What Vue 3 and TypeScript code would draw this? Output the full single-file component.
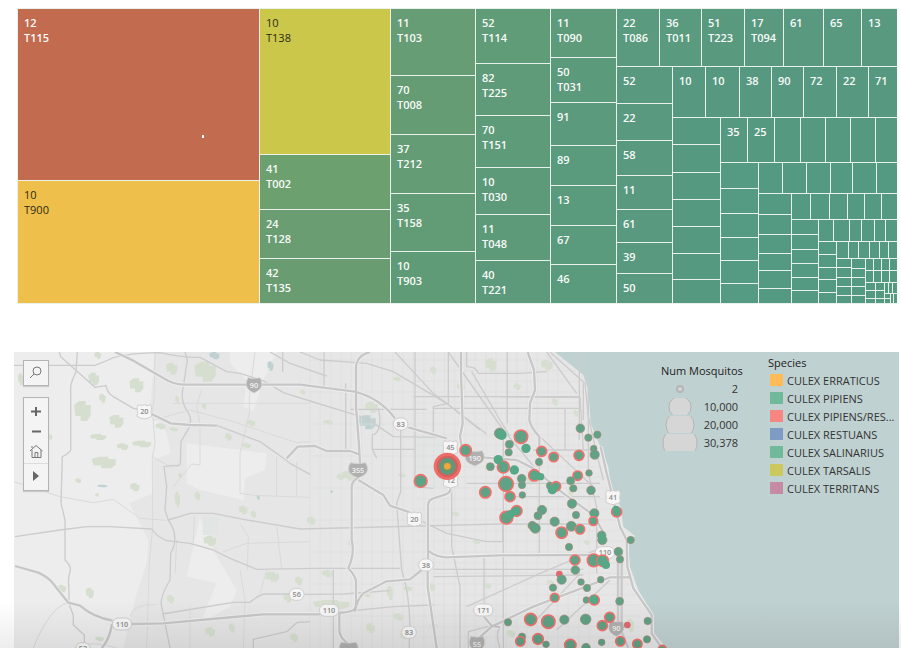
<script setup lang="ts">
import { h, type FunctionalComponent, type VNode } from 'vue'

/* ---------- Treemap ---------- */

interface Strip {
  axis: 'col' | 'row'
  end: number
  cuts: number[]
  tones: string[]
  labels?: string[]
}

const RIGHT = 897
const BOTTOM = 303

const deep = ['#549a82']

/* Each strip is cut off the remaining area: a column on its left or a row on its top. */
const strips: Strip[] = [
  { axis: 'col', end: 259, cuts: [180], tones: ['#c26b4f', '#efbf4b'], labels: ['12 T115', '10 T900'] },
  { axis: 'col', end: 390, cuts: [154, 209, 258], tones: ['#cac74b', '#6da06f', '#6a9d71', '#699c71'], labels: ['10 T138', '41 T002', '24 T128', '42 T135'] },
  { axis: 'col', end: 475, cuts: [75, 134, 193, 251], tones: ['#679d74', '#659c74', '#639c75', '#629c76', '#609b77'], labels: ['11 T103', '70 T008', '37 T212', '35 T158', '10 T903'] },
  { axis: 'col', end: 550, cuts: [63, 115, 167, 214, 260], tones: ['#609c78', '#5f9b78', '#5e9b79', '#5d9a7a', '#5d9a7a', '#5c9a7b'], labels: ['52 T114', '82 T225', '70 T151', '10 T030', '11 T048', '40 T221'] },
  { axis: 'col', end: 616, cuts: [57, 102, 145, 185, 225, 264], tones: ['#5d9b7b', '#5c9a7c', '#5b9a7d', '#5a9a7d'], labels: ['11 T090', '50 T031', '91', '89', '13', '67', '46'] },
  { axis: 'row', end: 66, cuts: [659, 701, 744, 783, 823, 861], tones: ['#5a9a7e', '#5a9a7e', '#59997e', '#59997f'], labels: ['22 T086', '36 T011', '51 T223', '17 T094', '61', '65', '13'] },
  { axis: 'col', end: 672, cuts: [103, 140, 175, 209, 242, 273], tones: ['#59997f', '#589980'], labels: ['52', '22', '58', '11', '61', '39', '50'] },
  { axis: 'row', end: 117, cuts: [705, 739, 771, 803, 836, 868], tones: ['#579980'], labels: ['10', '10', '38', '90', '72', '22', '71'] },
  { axis: 'col', end: 720, cuts: [144, 172, 199, 226, 253, 279], tones: ['#569981'] },
  { axis: 'row', end: 162, cuts: [747, 774, 800, 825, 850, 875], tones: ['#569981'], labels: ['35', '25'] },
  { axis: 'col', end: 758, cuts: [188, 213, 237, 260, 283], tones: ['#559a82'] },
  { axis: 'row', end: 193, cuts: [782, 806, 830, 852, 876], tones: deep },
  { axis: 'col', end: 791, cuts: [214, 234, 253, 270, 288], tones: deep },
  { axis: 'row', end: 219, cuts: [810, 829, 847, 864, 881], tones: deep },
  { axis: 'col', end: 818, cuts: [234, 249, 263, 277, 290], tones: deep },
  { axis: 'row', end: 241, cuts: [833, 849, 861, 874, 885], tones: deep },
  { axis: 'col', end: 836, cuts: [254, 267, 279, 292], tones: deep },
  { axis: 'row', end: 258, cuts: [848, 858, 869, 879, 888], tones: deep },
  { axis: 'col', end: 851, cuts: [267, 277, 286, 295], tones: deep },
  { axis: 'col', end: 865, cuts: [268, 277, 286, 295], tones: deep },
  { axis: 'row', end: 270, cuts: [873, 881, 889], tones: deep },
  { axis: 'row', end: 282, cuts: [873, 881, 889], tones: deep },
  { axis: 'col', end: 875, cuts: [290, 298], tones: deep },
  { axis: 'col', end: 884, cuts: [290, 298], tones: deep },
  { axis: 'row', end: 293, cuts: [888, 892], tones: deep },
  { axis: 'col', end: 890, cuts: [298], tones: deep },
  { axis: 'row', end: BOTTOM, cuts: [893], tones: deep },
]

const grow = (n: number) => ({ flexGrow: n })

function renderArea(index: number, x: number, y: number): VNode[] {
  const strip = strips[index]
  const isCol = strip.axis === 'col'
  const from = isCol ? x : y
  const limit = isCol ? RIGHT : BOTTOM
  const stops = [isCol ? y : x, ...strip.cuts, isCol ? BOTTOM : RIGHT]

  const cells = stops.slice(1).map((stop, i) => {
    const label = strip.labels?.[i]
    const tone = strip.tones[Math.min(i, strip.tones.length - 1)]
    const onLight = tone === '#efbf4b' || tone === '#cac74b'
    return h(
      'div',
      { class: ['cell', { dark: onLight }], style: { ...grow(stop - stops[i] - 1), background: tone } },
      label ? label.split(' ').map((line) => h('span', line)) : [],
    )
  })

  const out = [h('div', { class: ['strip', strip.axis], style: grow(strip.end - from - 1) }, cells)]
  if (index + 1 < strips.length) {
    const nx = isCol ? strip.end : x
    const ny = isCol ? y : strip.end
    out.push(
      h(
        'div',
        { class: ['area', strips[index + 1].axis === 'col' ? 'across' : 'down'], style: grow(limit - strip.end - 1) },
        renderArea(index + 1, nx, ny),
      ),
    )
  }
  return out
}

const TreemapArea: FunctionalComponent = () => h('div', { class: 'area across' }, renderArea(0, 17, 8))

/* ---------- Map ---------- */

type Box = [number, number, number, number]

const parks: Box[] = [
  [283, 36, 20, 20], [265, 98, 32, 38], [388, 115, 42, 42], [297, 162, 20, 26], [222, 183, 50, 60], [328, 225, 42, 38],
  [270, 282, 48, 18], [350, 310, 35, 20], [396, 302, 58, 20], [275, 350, 72, 35], [225, 415, 18, 14], [390, 430, 28, 24],
  [498, 68, 34, 36], [583, 65, 64, 60], [525, 168, 12, 20], [605, 190, 14, 18], [738, 240, 28, 18], [675, 280, 20, 22],
  [725, 310, 28, 14], [524, 455, 16, 46], [584, 455, 17, 26], [716, 497, 26, 26], [752, 512, 16, 22], [610, 588, 38, 30],
  [795, 695, 42, 30], [885, 710, 22, 26], [257, 743, 24, 32], [172, 735, 26, 22], [850, 760, 25, 28], [615, 862, 30, 28],
  [500, 765, 22, 25], [285, 460, 12, 10], [54, 100, 16, 36], [145, 283, 12, 16], [466, 250, 30, 18], [508, 262, 26, 12],
  [686, 850, 18, 28], [870, 880, 24, 26], [535, 398, 10, 16], [900, 150, 16, 14], [285, 890, 26, 14],
  [1095, 185, 38, 34], [1025, 392, 46, 30], [1010, 402, 20, 18], [920, 530, 26, 24], [965, 690, 34, 22], [938, 780, 110, 28],
  [1160, 738, 20, 42], [1210, 738, 26, 16], [1282, 730, 24, 22], [1090, 760, 22, 12], [1180, 820, 30, 22], [1098, 850, 26, 30],
  [1455, 55, 34, 40], [1622, 60, 36, 30], [1540, 130, 22, 20], [1655, 175, 18, 22], [1180, 110, 22, 14], [1290, 80, 18, 22],
  [1370, 130, 24, 22], [1195, 400, 22, 12], [1580, 410, 20, 24], [1418, 600, 22, 12], [1600, 640, 26, 12], [1355, 515, 22, 14],
  [1705, 440, 12, 34], [1450, 730, 24, 16], [1640, 720, 22, 14], [1290, 850, 20, 16], [970, 240, 28, 14], [905, 130, 18, 14],
  [1720, 210, 14, 20], [1880, 836, 22, 40], [1200, 878, 22, 20], [1520, 870, 26, 22], [1045, 600, 12, 22], [1750, 600, 20, 14],
]

const lakes: Box[] = [[628, 36, 30, 22], [802, 64, 18, 28], [292, 434, 30, 8], [770, 464, 9, 15], [1075, 226, 52, 42], [990, 450, 8, 10]]

const blob = ([x, y, w, hgt]: Box) =>
  `M${x} ${y + hgt * 0.2}L${x + w * 0.3} ${y}H${x + w * 0.7}V${y + hgt * 0.2}H${x + w}V${y + hgt * 0.7}L${x + w * 0.8} ${y + hgt}H${x + w * 0.4}V${y + hgt * 0.75}H${x + w * 0.08}Z`

const thick = [
  'M345 36L400 62 500 120Q525 134 555 134H900L1065 155Q1140 175 1185 235M1225 262L1340 295',
  'M455 222L512 250 570 255 652 257',
  'M860 355L893 320 945 318 980 333H1050L1078 343',
  'M45 678L115 698Q140 710 155 725L205 788 240 797Q280 832 338 842M392 852L490 850 790 823H960',
  'M336 852Q328 900 305 924',
  'M1110 36Q1065 48 1068 90V200Q1078 320 1080 372M1075 412Q1055 425 1055 440V600Q1065 640 1045 685Q1068 710 1068 725V800Q1062 818 1018 818V870Q1018 892 1045 912',
  'M1075 420L1150 465 1170 497 1230 517',
  'M1383 36V100L1388 250 1380 290 1386 325',
  'M1445 352L1550 360 1600 385 1690 460 1780 525 1812 580',
  'M1583 36L1602 90 1605 150 1590 190 1588 240Q1592 262 1618 290V360',
  'M1352 445Q1352 458 1335 464L1300 475Q1284 480 1284 495V660M1283 690V740L1310 924',
  'M1284 632Q1310 652 1340 652L1500 646 1800 645',
  'M1065 815Q1070 780 1090 760L1160 724 1230 718 1265 690',
  'M1425 905L1475 860 1600 800 1830 712',
  'M1452 830L1475 857 1500 862',
  'M1802 320L1820 400 1845 500 1860 560 1880 600 1882 680 1900 745 1955 825V880L1985 924',
  'M1830 712H1890',
]

const medium = [
  'M178 36L182 50 285 142 318 137Q322 160 340 170L400 205 415 208',
  'M652 257L780 305 830 340 870 370 930 403',
  'M232 36L228 95Q212 130 212 140V330Q208 340 187 350L183 490 195 540V660Q216 680 210 695T206 735T206 790L220 825V855L253 885V924',
  'M555 36L562 60 550 140Q540 180 560 210T566 265L543 305 541 370Q540 380 520 376L492 380 500 440 495 510 505 540Q540 590 512 640L510 720Q485 760 483 790L510 924',
  'M42 76H285L325 60Q360 40 480 38Q550 54 600 52L680 95 720 100 790 122 850 158 930 183 1100 235 1180 290 1320 292',
  'M45 590L180 570 260 560 330 560 455 567Q470 590 500 602L570 610 640 630 690 655 770 688 940 685H1200',
  'M505 540L570 520H640L730 538 900 567 1500 552H1800',
  'M487 822L700 787H750Q775 765 795 762H870M912 763L1030 762 1170 752',
  'M760 924V898L860 875 890 848 930 845',
  'M848 36V95M810 36L870 70 980 108',
  'M1202 270V455L1190 490 1205 690Q1228 760 1230 860M1228 895V924',
  'M1268 545L1340 580 1460 605H1508V552',
  'M972 36V140M1037 130V330M1245 36V440L1300 445',
  'M900 36L960 60 1100 70 1180 95 1340 190 1440 270',
  'M1185 36L1300 160 1460 282M1345 36L1510 270 1610 390',
  'M1415 95L1500 240 1530 290M1640 36L1730 160M1620 290L1780 440',
  'M1400 36V80Q1430 80 1435 100L1560 100 1640 95',
  'M1300 290V200L1345 190V36M1050 208H1280M1300 205H1740M1240 170H1740',
  'M1135 205Q1150 275 1117 285V328L1130 355M1117 328H1245',
  'M1452 655V800M1355 450V620L1380 740V924',
  'M1510 270V924M1522 36V250M1618 360V640M1695 205V330M1738 36V300M1765 120V400L1790 500V700',
  'M1500 170L1740 172 1750 330M1600 330H1780M1400 430H1800M1540 470H1800M1300 688H1750M1300 710L1750 705',
  'M1400 800L1620 700 1800 625M1670 870L1830 720M1590 860L1740 700',
  'M1475 857L1405 875V924M1500 862Q1485 880 1500 924M1000 924V690M1300 795L1180 800 960 822',
  'M1650 36L1755 130 1765 230 1790 340 1810 420M1750 130V240',
]

const thin = [
  'M42 425L180 470 280 488 340 478 420 535 500 541',
  'M465 36L462 180 457 210 465 310 457 350 458 560 448 670 440 924',
  'M604 150L590 200 600 250V375L575 372 520 440M457 350L520 385',
  'M765 36L748 170V220L720 340V460L760 466 930 472M830 350V470M890 365V470',
  'M460 240L570 210 700 245 890 308 930 305M520 190H930',
  'M720 550L745 590 742 690M830 560L845 685M670 635L740 610 930 605',
  'M583 530L580 610M530 600L525 700M720 690L735 780 730 924M800 690L780 760M390 830Q400 790 470 794M570 800V924',
  'M100 924Q150 800 205 788M260 912Q300 908 350 924',
]

/* Local streets: a fine grid that gets denser towards the shore. */
const streets = [
  ...Array.from({ length: 28 }, (_, i) => `M${930 + i * 31} ${i > 24 ? 240 : 36}V924`),
  ...Array.from({ length: 27 }, (_, i) => `M${i % 3 ? 1240 : 930} ${60 + i * 32}H${1720 + Math.min(i * 9, 200)}`),
]

type Shape = 'oval' | 'us' | 'interstate'
interface Shield { x: number; y: number; text: string; shape: Shape }

const shields: Shield[] = [
  { x: 433, y: 215, text: '20', shape: 'us' },
  { x: 762, y: 136, text: '90', shape: 'interstate' },
  { x: 890, y: 763, text: '56', shape: 'oval' },
  { x: 366, y: 852, text: '110', shape: 'oval' },
  { x: 249, y: 926, text: '52', shape: 'oval' },
  { x: 1202, y: 252, text: '83', shape: 'oval' },
  { x: 1351, y: 323, text: '45', shape: 'us' },
  { x: 1352, y: 422, text: '12', shape: 'us' },
  { x: 1424, y: 355, text: '190', shape: 'interstate' },
  { x: 1074, y: 391, text: '355', shape: 'interstate' },
  { x: 1243, y: 537, text: '20', shape: 'us' },
  { x: 1278, y: 675, text: '38', shape: 'oval' },
  { x: 987, y: 811, text: '110', shape: 'oval' },
  { x: 1450, y: 810, text: '171', shape: 'oval' },
  { x: 1227, y: 877, text: '83', shape: 'oval' },
  { x: 1431, y: 912, text: '55', shape: 'interstate' },
  { x: 1046, y: 930, text: '', shape: 'interstate' },
  { x: 1815, y: 638, text: '110', shape: 'oval' },
  { x: 1839, y: 472, text: '41', shape: 'us' },
  { x: 1849, y: 866, text: '90', shape: 'interstate' },
]

/* x, y, radius, kind: s = strong ring, t = thin ring, g = plain green, r = plain red */
type Trap = [number, number, number, 's' | 't' | 'g' | 'r']
const traps: Trap[] = [
  [1262, 423, 19, 's'], [1397, 331, 17, 's'], [1499, 280, 16, 't'], [1505, 285, 15, 'g'], [1563, 290, 20, 's'],
  [1528, 313, 12, 't'], [1526, 337, 11, 't'], [1578, 325, 14, 'g'], [1625, 334, 15, 's'], [1661, 351, 14, 's'],
  [1617, 366, 11, 't'], [1510, 381, 18, 's'], [1495, 359, 14, 'g'], [1471, 380, 12, 't'], [1543, 390, 14, 'g'],
  [1456, 457, 17, 's'], [1518, 432, 22, 's'], [1565, 416, 13, 't'], [1566, 435, 11, 't'], [1530, 470, 15, 's'],
  [1567, 465, 10, 't'], [1603, 406, 17, 's'], [1606, 406, 13, 'g'], [1622, 410, 11, 'g'], [1650, 437, 11, 't'],
  [1668, 439, 14, 's'], [1657, 449, 14, 'g'], [1741, 265, 13, 't'], [1765, 293, 11, 't'],
  [1792, 284, 11, 't'], [1781, 326, 10, 't'], [1784, 344, 14, 't'], [1737, 346, 15, 's'], [1733, 407, 14, 's'],
  [1767, 399, 10, 't'], [1712, 422, 12, 't'], [1720, 445, 11, 't'], [1773, 451, 13, 't'], [1716, 491, 14, 't'],
  [1728, 525, 11, 't'], [1783, 520, 14, 't'], [1780, 543, 13, 's'], [1550, 513, 16, 's'], [1519, 533, 19, 's'],
  [1531, 523, 13, 'g'], [1546, 514, 12, 'g'], [1626, 510, 14, 't'], [1614, 527, 12, 't'],
  [1597, 557, 13, 't'], [1606, 565, 15, 't'], [1664, 545, 14, 't'], [1685, 578, 17, 's'], [1714, 559, 15, 't'],
  [1740, 568, 14, 's'], [1805, 586, 13, 't'], [1807, 600, 14, 't'], [1805, 590, 11, 'g'], [1707, 621, 11, 't'],
  [1725, 660, 15, 's'], [1726, 690, 13, 't'], [1781, 661, 19, 's'], [1808, 662, 17, 's'],
  [1806, 663, 14, 'g'], [1818, 675, 12, 'g'], [1678, 702, 10, 'r'], [1685, 719, 14, 't'], [1743, 726, 10, 't'],
  [1761, 744, 11, 't'], [1802, 719, 10, 't'], [1659, 743, 11, 't'], [1664, 773, 13, 's'], [1759, 780, 10, 't'],
  [1783, 780, 15, 's'], [1781, 778, 12, 'g'], [1592, 838, 18, 's'], [1645, 845, 20, 's'], [1693, 839, 14, 't'],
  [1757, 838, 16, 't'], [1524, 847, 11, 't'], [1829, 832, 15, 's'], [1807, 857, 15, 's'], [1614, 897, 16, 's'],
  [1638, 913, 10, 't'], [1566, 890, 11, 't'], [1561, 904, 14, 's'],
  [1711, 915, 17, 's'], [1758, 923, 13, 't'], [1805, 907, 10, 't'], [1850, 516, 15, 's'], [1848, 508, 11, 'g'],
  [1892, 600, 11, 't'], [1855, 635, 13, 't'], [1860, 658, 11, 't'], [1859, 784, 12, 't'], [1943, 843, 11, 't'],
  [1882, 855, 10, 'r'], [1861, 904, 14, 's'], [1941, 898, 11, 't'], [1912, 912, 14, 's'], [1987, 928, 12, 's'],
]

/* ---------- Legends ---------- */

const sizes = [
  { label: '2', r: 3 },
  { label: '10,000', r: 11 },
  { label: '20,000', r: 14 },
  { label: '30,378', r: 17 },
]

const species = [
  { name: 'CULEX ERRATICUS', color: '#ffbc56' },
  { name: 'CULEX PIPIENS', color: '#71b99b' },
  { name: 'CULEX PIPIENS/RES...', color: '#f58681' },
  { name: 'CULEX RESTUANS', color: '#7e9bc3' },
  { name: 'CULEX SALINARIUS', color: '#71b99b' },
  { name: 'CULEX TARSALIS', color: '#cbc85e' },
  { name: 'CULEX TERRITANS', color: '#c68ba4' },
]
</script>

<template>
  <main class="page">
    <section class="treemap">
      <TreemapArea />
      <span class="pointer"></span>
    </section>

    <section class="map">
      <svg class="canvas" viewBox="42 36 2655 888" preserveAspectRatio="xMinYMin slice">
        <rect x="42" y="36" width="2655" height="888" fill="#e6e6e6" />
        <g fill="#ededed">
          <path d="M42 36H465L450 200 500 280 512 340 460 360V460L388 490 445 600 440 670 410 760 370 924H42Z" />
          <path d="M560 310L800 340 795 390 735 415 730 480 600 450 560 430Z" />
          <path d="M600 530L645 640 710 750 690 800 600 850 650 730 560 710Z" />
          <path d="M690 36H830L790 120 760 215 730 200 740 120 690 70Z" />
        </g>
        <path d="M1245 290H1325L1345 440 1300 442 1245 420Z" fill="#e1e5e3" />
        <path d="M608 530H655V585H608Z" fill="#e1e5e3" />
        <g fill="#d6dfcf"><path v-for="(p, i) in parks" :key="i" :d="blob(p)" /></g>
        <g fill="#bfd1d1"><path v-for="(p, i) in lakes" :key="i" :d="blob(p)" /></g>
        <g class="line street"><path v-for="(d, i) in streets" :key="i" :d="d" /></g>
        <g class="line thin"><path v-for="(d, i) in thin" :key="i" :d="d" /></g>
        <path d="M1665 36L1750 105 1765 150 1772 250 1805 330 1825 380 1832 440 1862 500 1870 560 1905 588 1884 612 1890 680 1915 750 1960 825 1962 880 2000 924H2697V36Z" fill="#c0d1d1" />
        <g class="line medium"><path v-for="(d, i) in medium" :key="i" :d="d" /></g>
        <g class="line casing"><path v-for="(d, i) in thick" :key="i" :d="d" /></g>
        <g class="line thick"><path v-for="(d, i) in thick" :key="i" :d="d" /></g>
        <path class="line trunk" d="M1854 640V850L1885 924M1865 640V850" />

        <g v-for="(s, i) in shields" :key="i" :transform="`translate(${s.x} ${s.y})`">
          <rect v-if="s.shape === 'oval'" :x="s.text.length > 2 ? -29 : -22" y="-18" :width="s.text.length > 2 ? 58 : 44" height="36" rx="18" class="plate" />
          <path v-else-if="s.shape === 'us'" d="M-18 -21L-8 -18 0 -21 8 -18 18 -21 22 -12 20 0 22 14 12 19 0 22 -12 19 -22 14 -20 0 -22 -12Z" class="plate" />
          <path
            v-else
            :transform="s.text.length === 2 ? '' : 'scale(1.25 1)'"
            d="M-18 -23Q0 -18 18 -23Q28 -4 18 11Q10 19 0 23Q-10 19 -18 11Q-28 -4 -18 -23Z"
            class="badge"
          />
          <text v-if="s.text" y="8" :class="['route', { light: s.shape === 'interstate' }]">{{ s.text }}</text>
        </g>

        <g>
          <circle v-for="(t, i) in traps" :key="i" :cx="t[0]" :cy="t[1]" :r="t[2]" :class="['trap', t[3]]" />
          <circle cx="1342" cy="379" r="41" fill="#ee6c68" />
          <circle cx="1342" cy="379" r="32" fill="#d2605c" />
          <circle cx="1342" cy="379" r="25" fill="#5b9a7b" />
          <circle cx="1342" cy="379" r="16" fill="#71956c" />
          <circle cx="1342" cy="379" r="10" fill="#efa93a" />
        </g>
      </svg>

      <div class="tools">
        <button type="button" class="tool search" aria-label="Search">
          <svg viewBox="0 0 16 16" width="16" height="16"><circle cx="9" cy="6" r="4" /><path d="M6 9L2 13" /></svg>
        </button>
        <div class="group">
          <button type="button" class="tool" aria-label="Zoom in">
            <svg viewBox="0 0 16 16" width="16" height="16"><path class="bold" d="M8 4V13M3 8.500H13" /></svg>
          </button>
          <button type="button" class="tool" aria-label="Zoom out">
            <svg viewBox="0 0 16 16" width="16" height="16"><path class="bold" d="M4 8.500H13" /></svg>
          </button>
          <button type="button" class="tool" aria-label="Home">
            <svg viewBox="0 0 16 16" width="16" height="16"><path d="M2 8L8 2.500 14.500 8M4 7V14.500H13V7M7 14V9.500H9.800V14M4 5V3" /></svg>
          </button>
          <button type="button" class="tool more" aria-label="More tools">
            <svg viewBox="0 0 16 16" width="16" height="16"><path class="solid" d="M5 3L11 8 5 13Z" /></svg>
          </button>
        </div>
      </div>

      <aside class="legends">
        <div class="legend num">
          <h2>Num Mosquitos</h2>
          <ul>
            <li v-for="s in sizes" :key="s.label">
              <svg viewBox="-18 -9 36 17" width="36" height="17">
                <circle :r="s.r" :class="{ tiny: s.r < 5 }" />
              </svg>
              <span>{{ s.label }}</span>
            </li>
          </ul>
        </div>
        <div class="legend kinds">
          <h2>Species</h2>
          <ul>
            <li v-for="s in species" :key="s.name">
              <i class="swatch" :style="{ background: s.color }"></i>
              <span>{{ s.name }}</span>
            </li>
          </ul>
        </div>
      </aside>
    </section>
    <div class="shade"></div>
  </main>
</template>

<style>
body {
  background: #fff;
}
</style>

<style scoped>
.page {
  position: relative;
  display: flex;
  flex-direction: column;
  gap: 48px;
  box-sizing: border-box;
  min-height: 100vh;
  padding-top: 8px;
  font-family: "Open Sans", "Noto Sans", sans-serif;
  font-size: 11px;
  color: #333;
}

/* Treemap */
.treemap {
  position: relative;
  display: flex;
  box-sizing: border-box;
  aspect-ratio: 880 / 296;
  margin: 0 4px 0 17px;
  padding: 1px 0 1px 1px;
  background: #e8f1eb;
}
.treemap :deep(.area),
.treemap :deep(.strip) {
  display: flex;
  flex: 1 1 0;
  gap: 1px;
  min-width: 0;
  min-height: 0;
}
.treemap :deep(.area.down),
.treemap :deep(.strip.col) {
  flex-direction: column;
}
.treemap :deep(.cell) {
  display: flex;
  flex: 1 1 0;
  flex-direction: column;
  min-width: 0;
  min-height: 0;
  overflow: hidden;
  color: #f8fbf9;
  font-weight: 600;
  line-height: 15px;
}
.treemap :deep(.cell span) {
  padding-left: 6px;
}
.treemap :deep(.cell span:first-child) {
  padding-top: 6px;
}
.treemap :deep(.cell.dark) {
  color: #2c2a18;
  font-weight: 400;
}
.pointer {
  position: absolute;
  left: 21%;
  top: 43%;
  width: 2px;
  height: 3px;
  background: #fff;
}

/* Map */
.map {
  position: relative;
  flex: 1;
  min-height: 240px;
  margin: 0 2px 0 14px;
  overflow: hidden;
  background: #c0d1d1;
}
.canvas {
  position: absolute;
  inset: 0;
  width: 100%;
  height: 100%;
}
.line {
  fill: none;
  stroke-linejoin: round;
}
.street {
  stroke: #dedede;
  stroke-width: 2;
}
.thin {
  stroke: #dadada;
  stroke-width: 3;
}
.medium {
  stroke: #cccccc;
  stroke-width: 4;
}
.casing {
  stroke: #efefef;
  stroke-width: 12;
}
.thick {
  stroke: #c7c7c7;
  stroke-width: 7;
}
.trunk {
  stroke: #cacaca;
  stroke-width: 7;
}
.plate {
  fill: #f6f6f6;
  stroke: #cfcfcf;
  stroke-width: 3;
}
.badge {
  fill: #b0b0b0;
  stroke: #d6d6d6;
  stroke-width: 2;
}
.route {
  font-size: 22px;
  font-weight: 600;
  fill: #8c8c8c;
  text-anchor: middle;
}
.route.light {
  fill: #f2f2f2;
}
.trap {
  fill: #5fa285;
}
.trap.s {
  stroke: #f0716d;
  stroke-width: 5;
}
.trap.t {
  stroke: #a9897a;
  stroke-width: 2;
}
.trap.g {
  fill: #56a886;
}
.trap.r {
  fill: #df6a6e;
}

/* Toolbar over the map */
.tools {
  position: absolute;
  left: 9px;
  top: 8px;
  display: flex;
  flex-direction: column;
  gap: 11px;
}
.tool {
  display: flex;
  align-items: center;
  justify-content: center;
  width: 24px;
  height: 20px;
  padding: 0;
  border: 0;
  background: none;
}
.tool svg {
  fill: none;
  stroke: #777;
  stroke-width: 1;
}
.tool .bold {
  stroke: #666;
  stroke-width: 2;
}
.tool .solid {
  fill: #666;
  stroke: none;
}
.search,
.group {
  box-sizing: border-box;
  width: 26px;
  border: 1px solid #b4b4b4;
  background: #f4f4f4;
  box-shadow: 0 1px 1px #ccc;
}
.search {
  height: 26px;
}
.group {
  padding: 3px 0;
}
.more {
  height: 24px;
  margin-top: 2px;
  border-top: 1px solid #ddd;
}

/* Legends over the map */
.legends {
  position: absolute;
  right: 0;
  top: 3px;
  display: flex;
  gap: 24px;
}
.legend h2 {
  margin: 0;
  font-size: 11px;
  font-weight: 400;
  line-height: 16px;
  color: #222;
  white-space: nowrap;
}
.legend ul {
  margin: 0;
  padding: 0;
  list-style: none;
}
.legend li {
  display: flex;
  align-items: center;
  height: 18px;
  white-space: nowrap;
}
.num {
  width: 83px;
  padding-top: 8px;
}
.num svg {
  fill: #d6d6d6;
  stroke: #b5b5b5;
  stroke-width: 1;
}
.num .tiny {
  stroke-width: 2;
}
.num li {
  justify-content: space-between;
  padding: 0 6px 0 1px;
}
.kinds {
  width: 131px;
}
.kinds li {
  gap: 4px;
  padding-left: 2px;
}
.swatch {
  width: 13px;
  height: 12px;
}
.shade {
  position: absolute;
  left: 0;
  right: 0;
  bottom: 0;
  height: 48px;
  background: linear-gradient(rgba(0, 0, 0, 0), rgba(0, 0, 0, 0.07));
  pointer-events: none;
}
</style>
